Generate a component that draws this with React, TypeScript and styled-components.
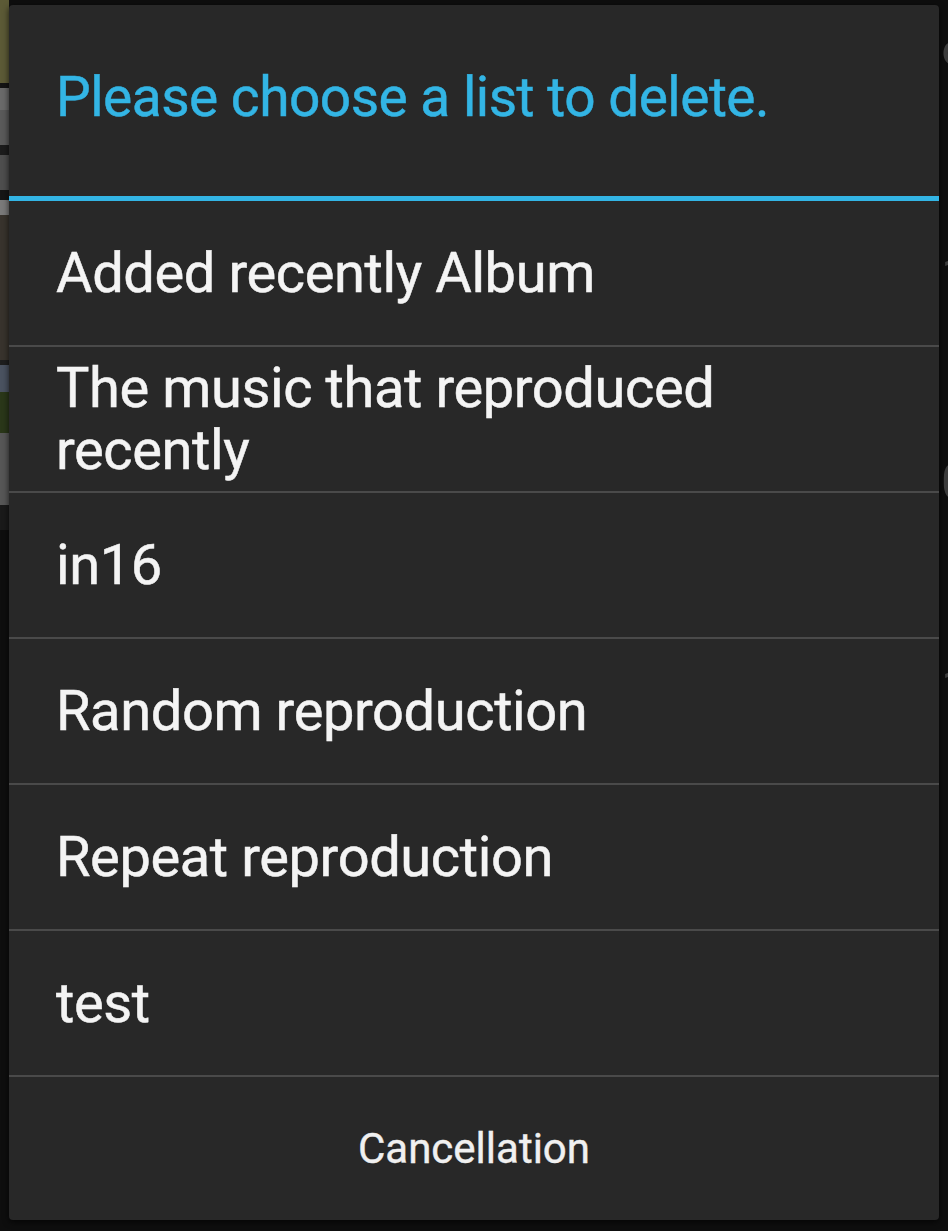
import styled, { createGlobalStyle } from 'styled-components';

const GlobalStyle = createGlobalStyle`
    html, body {
        margin: 0;
        padding: 0;
        background: #0e0e0e;
    }
    * {
        box-sizing: border-box;
    }
`;

const lists = [
    'Added recently Album',
    'The music that reproduced recently',
    'in16',
    'Random reproduction',
    'Repeat reproduction',
    'test',
];

// dimmed screen behind the dialog, only the edges show
const bands = [
    { h: 83, c: '#5c5a36' },
    { h: 5, c: '#141414' },
    { h: 22, c: '#6a6a6a' },
    { h: 35, c: '#5a5a5a' },
    { h: 10, c: '#1c1c1c' },
    { h: 35, c: '#4e4e4e' },
    { h: 10, c: '#161616' },
    { h: 15, c: '#7a7a7a' },
    { h: 145, c: '#38332d' },
    { h: 5, c: '#1e1e1e' },
    { h: 27, c: '#4a5260' },
    { h: 41, c: '#2a3719' },
    { h: 72, c: '#575757' },
    { h: 25, c: '#1a1a1a' },
];

const sideDigits = [
    { top: 30, d: '9' },
    { top: 186, d: '1' },
    { top: 332, d: '0' },
    { top: 478, d: '1' },
];

const App = () => {
    return (
        <>
            <GlobalStyle />
            <Screen>
                <LeftStrip>
                    { bands.map((b, i) => <Band key={i} h={b.h} c={b.c} />) }
                </LeftStrip>

                <Dialog>
                    <TitleBar>
                        <Title>Please choose a list to delete.</Title>
                    </TitleBar>
                    <Accent />
                    <List>
                        { lists.map(name => (
                            <Item key={name}>
                                <ItemText>{name}</ItemText>
                            </Item>
                        )) }
                    </List>
                    <CancelButton>Cancellation</CancelButton>
                </Dialog>

                <RightStrip>
                    { sideDigits.map(s => <Digit key={s.top} top={s.top}>{s.d}</Digit>) }
                </RightStrip>
            </Screen>
        </>
    );
};

const Screen = styled.div`
    display: flex;
    width: 948px;
    height: 1231px;
    overflow: hidden;
    background: #0e0e0e;
    font-family: Roboto, "Open Sans", sans-serif;
`;

const LeftStrip = styled.div`
    width: 9px;
    flex: none;
    display: flex;
    flex-direction: column;
`;

const Band = styled.div<{ h: number; c: string }>`
    height: ${p => p.h}px;
    background: ${p => p.c};
    flex: none;
`;

const RightStrip = styled.div`
    width: 9px;
    flex: none;
    display: flex;
    flex-direction: column;
    overflow: hidden;
`;

const Digit = styled.div<{ top: number }>`
    margin-top: ${p => p.top}px;
    margin-bottom: -${p => p.top}px;
    height: 60px;
    padding-left: 2px;
    font-size: 50px;
    line-height: 60px;
    color: #3c3c3c;
`;

const Dialog = styled.div`
    width: 930px;
    height: 1215px;
    margin-top: 5px;
    flex: none;
    display: flex;
    flex-direction: column;
    background: #282828;
    border-radius: 4px;
    box-shadow: 0 2px 6px rgba(0, 0, 0, 0.7);
    overflow: hidden;
`;

const TitleBar = styled.div`
    height: 191px;
    display: flex;
    align-items: center;
    padding-left: 47px;
`;

const Title = styled.div`
    color: #33b5e5;
    font-size: 55px;
    letter-spacing: -0.5px;
    line-height: 1;
    margin-top: -7px;
    -webkit-text-stroke: 0.5px #33b5e5;
`;

const Accent = styled.div`
    height: 5px;
    background: #33b5e5;
`;

const List = styled.div`
    display: flex;
    flex-direction: column;
`;

const Item = styled.div`
    height: 146px;
    display: flex;
    align-items: center;
    padding: 0 47px;
    border-bottom: 2px solid #4a4a4a;
`;

const ItemText = styled.div`
    color: #f4f4f4;
    font-size: 56px;
    letter-spacing: -0.4px;
    line-height: 62px;
    max-width: 700px;
    -webkit-text-stroke: 0.5px #f4f4f4;
`;

const CancelButton = styled.div`
    flex: 1;
    display: flex;
    align-items: center;
    justify-content: center;
    color: #f0f0f0;
    font-size: 42px;
    -webkit-text-stroke: 0.4px #f0f0f0;
`;

export default App;
